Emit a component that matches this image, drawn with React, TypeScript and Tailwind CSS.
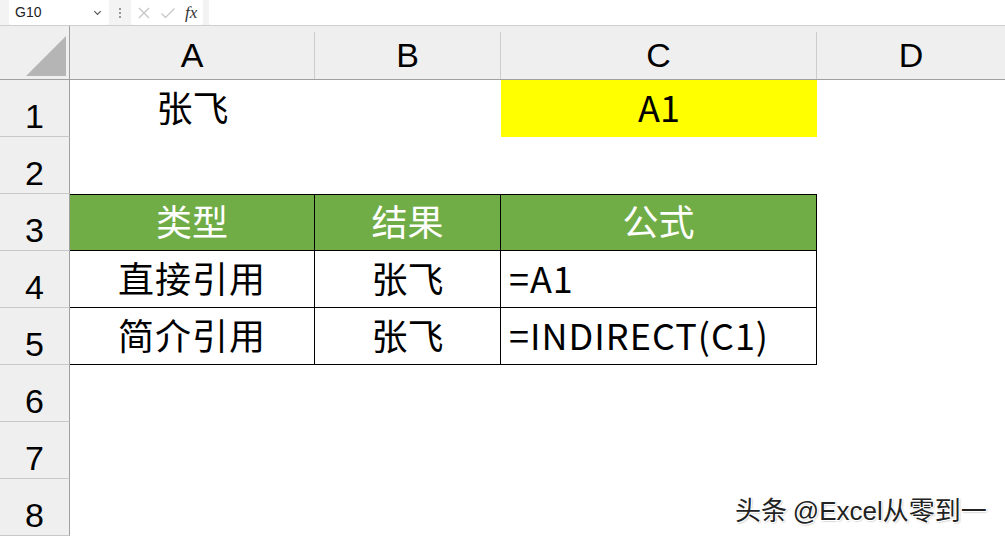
const cjk = { fontFamily: '"Noto Sans CJK SC", "Noto Sans", sans-serif' };
const latin = { fontFamily: '"Liberation Sans", Arial, sans-serif' };

const cols = ["A", "B", "C", "D"];

function RowHead({ n }: { n: number }) {
  return (
    <div
      className="flex items-end justify-center bg-[#efefef] border-r border-b border-r-[#a0a0a0] border-b-[#c8c8c8] text-[34px] leading-none text-black"
      style={latin}
    >
      <span className="pb-[3px]">{n}</span>
    </div>
  );
}

function Cell({
  children,
  className = "",
}: {
  children?: React.ReactNode;
  className?: string;
}) {
  return (
    <div className={`flex items-center pb-[5px] text-[36px] leading-none text-black ${className}`} style={cjk}>
      {children}
    </div>
  );
}

export default function App() {
  return (
    <div className="relative w-[1005px] h-[536px] overflow-hidden bg-white flex flex-col">
      {/* formula bar */}
      <div className="h-[26px] flex items-stretch bg-[#f3f3f3] border-b border-[#cfcfcf]">
        <div className="ml-[9px] w-[100px] h-[25px] bg-white rounded-b-[3px] flex items-center justify-between pl-[6px] pr-[6px] text-[14px] text-[#222]" style={latin}>
          <span>G10</span>
          <svg width="11" height="11" viewBox="0 0 12 12" fill="none" stroke="#555" strokeWidth="1.3">
            <path d="M2.5 4.5 6 8l3.5-3.5" />
          </svg>
        </div>
        <div className="w-[22px] flex flex-col items-center justify-center gap-[2px]">
          <span className="w-[2px] h-[2px] bg-[#999]" />
          <span className="w-[2px] h-[2px] bg-[#999]" />
          <span className="w-[2px] h-[2px] bg-[#999]" />
        </div>
        <div className="w-[72px] h-[25px] bg-white rounded-b-[3px] flex items-center pl-[6px] gap-[9px]">
          <svg width="14" height="14" viewBox="0 0 14 14" stroke="#c4c4c4" strokeWidth="1.2">
            <path d="M2 2l10 10M12 2 2 12" />
          </svg>
          <svg width="16" height="14" viewBox="0 0 16 14" fill="none" stroke="#c4c4c4" strokeWidth="1.2">
            <path d="M1.5 7.5 5.5 11.5 14.5 2.5" />
          </svg>
          <span className="text-[17px] italic text-[#333] leading-none" style={{ fontFamily: '"Liberation Serif", serif' }}>
            fx
          </span>
        </div>
        <div className="ml-[6px] flex-1 h-[25px] bg-white rounded-bl-[3px]" />
      </div>

      <div className="grid grid-cols-[70px_245px_186px_316px_188px] grid-rows-[54px_repeat(8,57px)]">
        {/* column header row */}
        <div className="relative bg-[#efefef] border-r border-b border-r-[#a0a0a0] border-b-[#a0a0a0] overflow-hidden">
          <svg className="absolute right-[3px] bottom-[3px]" width="40" height="40" viewBox="0 0 40 40">
            <path d="M40 0V40H0Z" fill="#b5b5b5" />
          </svg>
        </div>
        {cols.map((c, i) => (
          <div
            key={c}
            className="flex items-stretch bg-[#efefef] border-b border-b-[#a0a0a0] text-[34px] leading-none text-black"
            style={latin}
          >
            <div className="flex-1 flex items-end justify-center pb-[7px]">{c}</div>
            {i < 3 && <div className="w-px mt-[6px] bg-[#cdcdcd]" />}
          </div>
        ))}

        {/* row 1 */}
        <RowHead n={1} />
        <Cell className="justify-center">张飞</Cell>
        <Cell />
        <Cell className="justify-center bg-[#ffff00]">A1</Cell>
        <Cell />

        {/* row 2 */}
        <RowHead n={2} />
        <Cell />
        <Cell />
        <Cell />
        <Cell />

        {/* row 3 */}
        <RowHead n={3} />
        <Cell className="justify-center bg-[#70ad47] text-white border-t border-b border-r border-black">类型</Cell>
        <Cell className="justify-center bg-[#70ad47] text-white border-t border-b border-r border-black">结果</Cell>
        <Cell className="justify-center bg-[#70ad47] text-white border-t border-b border-r border-black">公式</Cell>
        <Cell />

        {/* row 4 */}
        <RowHead n={4} />
        <Cell className="justify-center border-b border-r border-black tracking-[1px]">直接引用</Cell>
        <Cell className="justify-center border-b border-r border-black">张飞</Cell>
        <Cell className="pl-[8px] border-b border-r border-black tracking-[1px]">=A1</Cell>
        <Cell />

        {/* row 5 */}
        <RowHead n={5} />
        <Cell className="justify-center border-b border-r border-black tracking-[1px]">简介引用</Cell>
        <Cell className="justify-center border-b border-r border-black">张飞</Cell>
        <Cell className="pl-[8px] border-b border-r border-black tracking-[1px]">=INDIRECT(C1)</Cell>
        <Cell />

        {/* rows 6-8 */}
        {[6, 7, 8].map((n) => (
          <div key={n} className="contents">
            <RowHead n={n} />
            <Cell />
            <Cell />
            <Cell />
            <Cell />
          </div>
        ))}
      </div>

      {/* watermark */}
      <div
        className="absolute left-[735px] top-[496px] flex items-baseline text-[26px] leading-none text-[#222] whitespace-nowrap"
        style={{ textShadow: "1px 1px 0 #fff, -1px -1px 0 #fff, 1px -1px 0 #fff, -1px 1px 0 #fff, 1px 1px 2px #888" }}
      >
        <span style={cjk}>头条&nbsp;</span>
        <span style={latin}>@Excel</span>
        <span style={cjk}>从零到一</span>
      </div>
    </div>
  );
}
